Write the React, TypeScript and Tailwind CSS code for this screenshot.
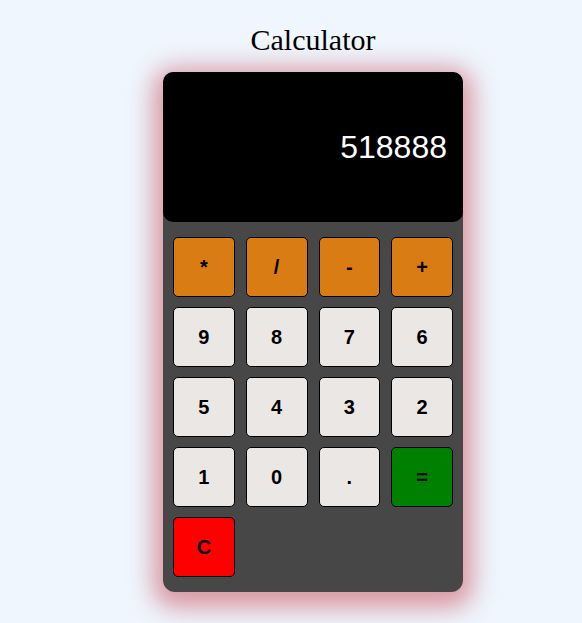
import React from "react";

const keys: { label: string; className: string }[] = [
  { label: "*", className: "bg-[#da7c14]" },
  { label: "/", className: "bg-[#da7c14]" },
  { label: "-", className: "bg-[#da7c14]" },
  { label: "+", className: "bg-[#da7c14]" },
  { label: "9", className: "bg-[#ebe7e4]" },
  { label: "8", className: "bg-[#ebe7e4]" },
  { label: "7", className: "bg-[#ebe7e4]" },
  { label: "6", className: "bg-[#ebe7e4]" },
  { label: "5", className: "bg-[#ebe7e4]" },
  { label: "4", className: "bg-[#ebe7e4]" },
  { label: "3", className: "bg-[#ebe7e4]" },
  { label: "2", className: "bg-[#ebe7e4]" },
  { label: "1", className: "bg-[#ebe7e4]" },
  { label: "0", className: "bg-[#ebe7e4]" },
  { label: ".", className: "bg-[#ebe7e4]" },
  { label: "=", className: "bg-[#008000]" },
  { label: "C", className: "bg-[#ff0000]" },
];

const App = () => {
  return (
    <div className="min-h-[623px] bg-[#eff6fe] pl-[44px] flex flex-col items-center">
      <h1 className="mt-[22px] text-[30px] leading-[36px] text-black font-['Liberation_Serif',serif]">
        Calculator
      </h1>

      <div className="mt-[14px] w-[300px] rounded-[12px] bg-[#474747] pb-[15px] shadow-[0_6px_24px_10px_rgba(190,40,50,0.45)]">
        {/* Display */}
        <div className="h-[150px] rounded-[10px] bg-black flex items-center justify-end pr-[16px]">
          <span className="text-white text-[32px] font-['Liberation_Sans',Arial,sans-serif]">
            518888
          </span>
        </div>

        {/* Keys */}
        <div className="mt-[15px] px-[10px] grid grid-cols-4 gap-x-[11px] gap-y-[10px]">
          {keys.map((key) => (
            <button
              key={key.label}
              className={`h-[60px] rounded-[5px] border border-black text-black text-[20px] font-bold font-['Liberation_Sans',Arial,sans-serif] ${key.className}`}
            >
              {key.label}
            </button>
          ))}
        </div>
      </div>
    </div>
  );
};

export default App;
